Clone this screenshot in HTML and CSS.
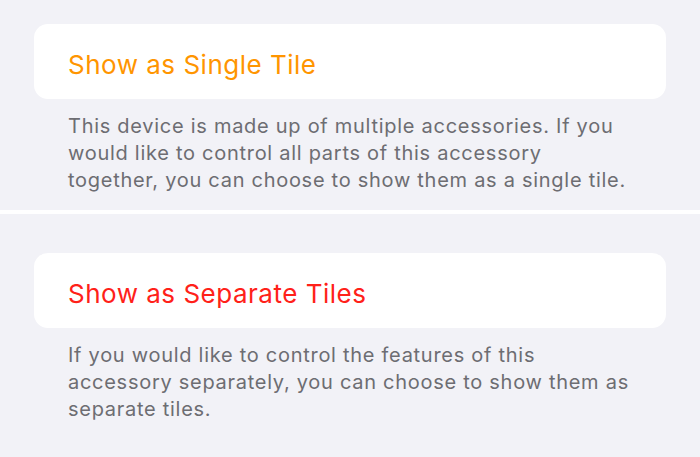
FILE: index.html
```html
<!DOCTYPE html>
<html lang="en">
<head>
    <meta charset="UTF-8">
    <meta name="viewport" content="width=device-width, initial-scale=1.0">
    <title>Accessory Tiles</title>
    <link rel="stylesheet" href="styles.css">
</head>
<body>

    <!-- Einzelne Kachel -->
    <section class="group group-first">
        <div class="card">
            <span class="card-title title-orange">Show as Single Tile</span>
        </div>
        <p class="footer-text">This device is made up of multiple accessories. If you<br>
            would like to control all parts of this accessory<br>
            together, you can choose to show them as a single tile.</p>
    </section>

    <div class="divider"></div>

    <!-- Getrennte Kacheln -->
    <section class="group group-second">
        <div class="card">
            <span class="card-title title-red">Show as Separate Tiles</span>
        </div>
        <p class="footer-text">If you would like to control the features of this<br>
            accessory separately, you can choose to show them as<br>
            separate tiles.</p>
    </section>

</body>
</html>
```

FILE: styles.css
```css
body {
    margin: 0;
    background-color: #f2f2f7;
    font-family: Inter, "Liberation Sans", Arial, sans-serif;
}

.group {
    padding: 0 34px;
}

.group-first {
    padding-top: 24px;
    padding-bottom: 16px;
}

.group-second {
    padding-top: 39px;
    padding-bottom: 20px;
}

.divider {
    height: 4px;
    background-color: #ffffff;
}

.card {
    background-color: #ffffff;
    border-radius: 14px;
    height: 75px;
    box-sizing: border-box;
    padding: 25px 34px 0;
}

.card-title {
    display: block;
    font-size: 26px;
    line-height: 31px;
    letter-spacing: 0.5px;
}

.title-orange {
    color: #ff9500;
}

.title-red {
    color: #ff2119;
}

.footer-text {
    margin: 14px 0 0;
    padding: 0 34px;
    font-size: 20px;
    line-height: 27px;
    letter-spacing: 0.72px;
    white-space: nowrap;
    color: #6d6d72;
}
```
